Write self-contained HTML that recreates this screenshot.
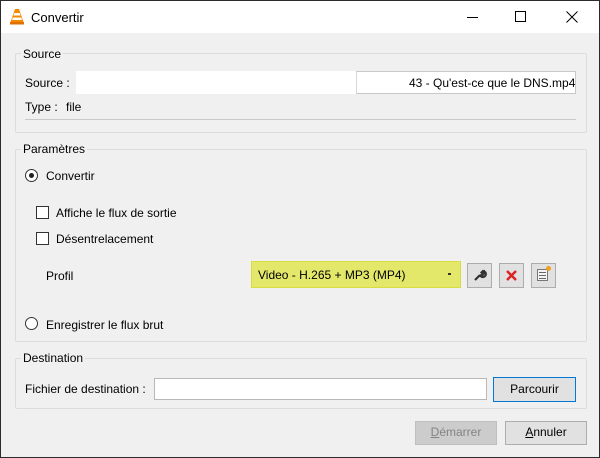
<!DOCTYPE html>
<html><head><meta charset="utf-8"><style>
*{box-sizing:border-box;margin:0;padding:0}
body{width:600px;height:458px;overflow:hidden;background:#f0f0f0;font-family:"Liberation Sans",sans-serif;font-size:12px;color:#000;position:relative}
.win{position:absolute;left:0;top:0;width:600px;height:458px;border:1px solid #2b2b2b;background:#f0f0f0}
.title{position:absolute;left:0;top:0;width:598px;height:32px;background:#fff}
.a{position:absolute;white-space:nowrap}
.grp{position:absolute;border:1px solid #dcdcdc;border-radius:2px}
.inp{position:absolute;background:#fff;border:1px solid #c8c8c8}
.btn{position:absolute;background:#e1e1e1;border:1px solid #adadad;text-align:center;line-height:21px}
.radio{position:absolute;width:13px;height:13px;border:1px solid #333;border-radius:50%;background:#fff}
.chk{position:absolute;width:13px;height:13px;border:1px solid #333;background:#fff}
</style></head><body><div class="win">
<div class="title"></div>
<svg class="a" style="left:8px;top:7px" width="16" height="17" viewBox="0 0 16 17"><path d="M6 1h4l4.5 13h-13z" fill="#f28b00"/><path d="M5.3 5h5.4l0.8 2.5h-7z M3.8 9.5h8.4l0.8 2.5h-10z" fill="#fff"/><rect x="1" y="14" width="14" height="2.5" fill="#e07000"/></svg>
<div class="a" style="left:30px;top:9px;font-size:13px">Convertir</div>
<div class="a" style="left:466px;top:16px;width:11px;height:1px;background:#000"></div>
<div class="a" style="left:514px;top:10px;width:11px;height:11px;border:1px solid #000"></div>
<svg class="a" style="left:565px;top:10px" width="12" height="12"><path d="M0.5 0.5L11.5 11.5M11.5 0.5L0.5 11.5" stroke="#000" stroke-width="1"/></svg>

<div class="grp" style="left:14px;top:52px;width:572px;height:80px"></div>
<div class="a" style="left:20px;top:46px;background:#f0f0f0;padding:0 2px">Source</div>
<div class="a" style="left:24px;top:75px">Source :</div>
<div class="inp" style="left:75px;top:70px;width:500px;height:23px;border-color:#fff"></div>
<div class="inp" style="left:355px;top:70px;width:220px;height:23px;border-color:#c8c8c8;border-left:1px solid #d8d8d8"></div>
<div class="a" style="left:408px;top:75px">43 - Qu'est-ce que le DNS.mp4</div>
<div class="a" style="left:24px;top:99px">Type :</div>
<div class="a" style="left:65px;top:99px">file</div>
<div class="a" style="left:24px;top:118px;width:551px;height:1px;background:#c8c8c8"></div>

<div class="grp" style="left:14px;top:148px;width:572px;height:193px"></div>
<div class="a" style="left:20px;top:141px;background:#f0f0f0;padding:0 2px">Paramètres</div>
<div class="radio" style="left:24px;top:168px"></div><div class="a" style="left:28px;top:172px;width:5px;height:5px;border-radius:50%;background:#222"></div>
<div class="a" style="left:45px;top:168px">Convertir</div>
<div class="chk" style="left:35px;top:205px"></div><div class="a" style="left:55px;top:205px">Affiche le flux de sortie</div>
<div class="chk" style="left:35px;top:231px"></div><div class="a" style="left:55px;top:231px">Désentrelacement</div>
<div class="a" style="left:45px;top:268px">Profil</div>
<div class="a" style="left:250px;top:260px;width:210px;height:27px;background:#e4e86a;border:1px solid #d8dc40"></div>
<div class="a" style="left:257px;top:267px">Video - H.265 + MP3 (MP4)</div>
<div class="a" style="left:447px;top:272px;width:3px;height:2px;background:#333"></div>
<div class="btn" style="left:466px;top:262px;width:25px;height:25px"></div>
<svg class="a" style="left:471px;top:267px" width="15" height="15"><path d="M3 12L8 7M8 7a3 3 0 1 0 3-4l-1.5 1.5 1 1 1.5-1.5a3 3 0 0 1-4 3" stroke="#333" stroke-width="2.2" fill="none"/></svg>
<div class="btn" style="left:498px;top:262px;width:25px;height:25px"></div>
<svg class="a" style="left:504px;top:268px" width="13" height="13"><path d="M2 2L11 11M11 2L2 11" stroke="#d22" stroke-width="2.4"/></svg>
<div class="btn" style="left:530px;top:262px;width:25px;height:25px"></div>
<div class="a" style="left:536px;top:268px;width:11px;height:12px;border:1px solid #777;background:#f4f4f4"></div>
<div class="a" style="left:538px;top:271px;width:7px;height:1px;background:#666;box-shadow:0 3px #666,0 6px #666"></div>
<div class="a" style="left:545px;top:265px;width:5px;height:5px;border-radius:50%;background:#f0a020"></div>
<div class="radio" style="left:24px;top:316px"></div>
<div class="a" style="left:45px;top:317px">Enregistrer le flux brut</div>

<div class="grp" style="left:14px;top:357px;width:572px;height:51px"></div>
<div class="a" style="left:20px;top:350px;background:#f0f0f0;padding:0 2px">Destination</div>
<div class="a" style="left:24px;top:381px">Fichier de destination :</div>
<div class="inp" style="left:153px;top:377px;width:333px;height:22px;border-color:#b8b8b8"></div>
<div class="btn" style="left:492px;top:376px;width:83px;height:25px;border:1px solid #0078d7;line-height:23px">Parcourir</div>
<div class="btn" style="left:414px;top:420px;width:82px;height:24px;background:#cccccc;border-color:#bfbfbf;color:#838383"><u>D</u>émarrer</div>
<div class="btn" style="left:504px;top:420px;width:82px;height:24px"><u>A</u>nnuler</div>
</div></body></html>
